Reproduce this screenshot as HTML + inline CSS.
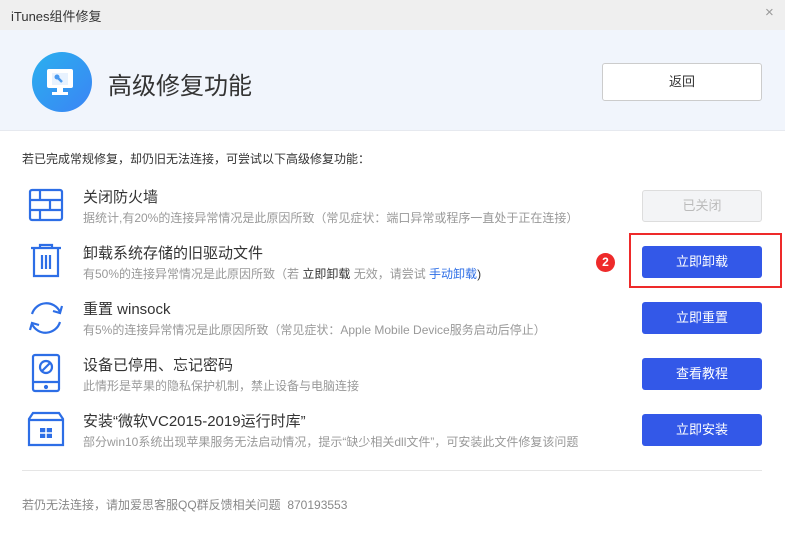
<!DOCTYPE html><html><head><meta charset="utf-8"><style>
*{margin:0;padding:0;box-sizing:border-box}
body{width:785px;height:540px;overflow:hidden;background:#fff;font-family:"Liberation Sans","Noto Sans CJK SC",sans-serif;position:relative;color:#333}
.a{position:absolute}
.t{font-size:15px;color:#333;white-space:nowrap}
.s{font-size:12px;color:#999;white-space:nowrap}
.b{position:absolute;left:642px;width:120px;height:32px;border-radius:3px;background:#3358e8;color:#fff;font-size:13px;text-align:center;line-height:32px}
</style></head><body>
<div class="a" style="left:0;top:0;width:785px;height:30px;background:#efefef"></div>
<div class="a" style="left:11px;top:6px;font-size:13px;color:#333">iTunes组件修复</div>
<div class="a" style="left:765px;top:4px;font-size:15px;color:#999">×</div>
<div class="a" style="left:0;top:30px;width:785px;height:101px;background:#f1f5fc;border-bottom:1px solid #e6e9ef"></div>
<div class="a" style="left:32px;top:52px;width:60px;height:60px;border-radius:50%;background:linear-gradient(135deg,#2ab0ee,#3b84f5)"></div>
<svg class="a" style="left:46px;top:68px" width="32" height="32" viewBox="0 0 32 32"><rect x="1" y="1" width="26" height="19" rx="2" fill="#fff"/><rect x="6" y="5" width="16" height="12" fill="#e8f2fe"/><path d="M11 9l5 5" stroke="#4a9af0" stroke-width="2.5"/><circle cx="11" cy="9" r="2.5" fill="#4a9af0"/><rect x="11" y="20" width="6" height="5" fill="#fff"/><rect x="6" y="24" width="16" height="3" fill="#fff"/></svg>
<div class="a" style="left:108px;top:66px;font-size:24px;color:#333">高级修复功能</div>
<div class="a" style="left:602px;top:63px;width:160px;height:38px;background:#fff;border:1px solid #ccc;border-radius:3px;text-align:center;line-height:36px;font-size:13px;color:#333">返回</div>
<div class="a" style="left:22px;top:150px;font-size:12px;color:#333">若已完成常规修复，却仍旧无法连接，可尝试以下高级修复功能：</div>

<svg class="a" style="left:28px;top:188px" width="36" height="36" viewBox="0 0 36 36" fill="none" stroke="#2d6ee6" stroke-width="2.2"><rect x="2" y="2" width="32" height="30" rx="2"/><path d="M2 12h32M2 22h32M12 2v10M22 12v10M12 22v10"/></svg>
<div class="a t" style="left:83px;top:186px">关闭防火墙</div>
<div class="a s" style="left:83px;top:209px">据统计,有20%的连接异常情况是此原因所致（常见症状：端口异常或程序一直处于正在连接）</div>
<div class="b" style="top:190px;background:#f3f4f6;border:1px solid #ddd;color:#bbb;line-height:30px">已关闭</div>

<svg class="a" style="left:28px;top:243px" width="36" height="36" viewBox="0 0 36 36" fill="none" stroke="#2d6ee6" stroke-width="2.2"><path d="M3 5h30M12 5V2h12v3M6 5v28h24V5M14 12v14M18 12v14M22 12v14"/></svg>
<div class="a t" style="left:83px;top:242px">卸载系统存储的旧驱动文件</div>
<div class="a s" style="left:83px;top:265px">有50%的连接异常情况是此原因所致（若 <span style="color:#333">立即卸载</span> 无效，请尝试 <span style="color:#2d6ee6">手动卸载</span><span style="color:#333">)</span></div>
<div class="a" style="left:629px;top:233px;width:153px;height:55px;border:2px solid #ee2a2a"></div>
<div class="a" style="left:596px;top:253px;width:19px;height:19px;border-radius:50%;background:#ee2a2a;color:#fff;font-size:12px;font-weight:bold;text-align:center;line-height:19px">2</div>
<div class="b" style="top:246px">立即卸载</div>

<svg class="a" style="left:26px;top:298px" width="40" height="40" viewBox="0 0 40 40" fill="none" stroke="#2d6ee6" stroke-width="2.2"><path d="M6 16A15 15 0 0 1 34 14M34 24A15 15 0 0 1 6 26"/><path d="M36 8l-2 7-7-2M4 32l2-7 7 2"/></svg>
<div class="a t" style="left:83px;top:298px">重置 winsock</div>
<div class="a s" style="left:83px;top:321px">有5%的连接异常情况是此原因所致（常见症状：Apple Mobile Device服务启动后停止）</div>
<div class="b" style="top:302px">立即重置</div>

<svg class="a" style="left:31px;top:353px" width="30" height="40" viewBox="0 0 30 40" fill="none" stroke="#2d6ee6" stroke-width="2.2"><rect x="2" y="2" width="26" height="36" rx="2"/><path d="M2 29h26"/><circle cx="15" cy="14" r="6"/><path d="M11 18l8-8"/><circle cx="15" cy="34" r="1" fill="#2d6ee6"/></svg>
<div class="a t" style="left:83px;top:354px">设备已停用、忘记密码</div>
<div class="a s" style="left:83px;top:377px">此情形是苹果的隐私保护机制，禁止设备与电脑连接</div>
<div class="b" style="top:358px">查看教程</div>

<svg class="a" style="left:27px;top:411px" width="38" height="36" viewBox="0 0 38 36" fill="none" stroke="#2d6ee6" stroke-width="2.2"><path d="M6 2h26l4 6v26H2V8zM2 9h34"/><rect x="13" y="17" width="12" height="10" fill="#2d6ee6" stroke="none"/><path d="M19 17v10M13 22h12" stroke="#fff" stroke-width="1.5"/></svg>
<div class="a t" style="left:83px;top:410px">安装“微软VC2015-2019运行时库”</div>
<div class="a s" style="left:83px;top:433px">部分win10系统出现苹果服务无法启动情况，提示“缺少相关dll文件”，可安装此文件修复该问题</div>
<div class="b" style="top:414px">立即安装</div>

<div class="a" style="left:22px;top:470px;width:740px;height:1px;background:#e5e5e5"></div>
<div class="a" style="left:22px;top:496px;font-size:12px;color:#888">若仍无法连接，请加爱思客服QQ群反馈相关问题&nbsp;&nbsp;870193553</div>
</body></html>
